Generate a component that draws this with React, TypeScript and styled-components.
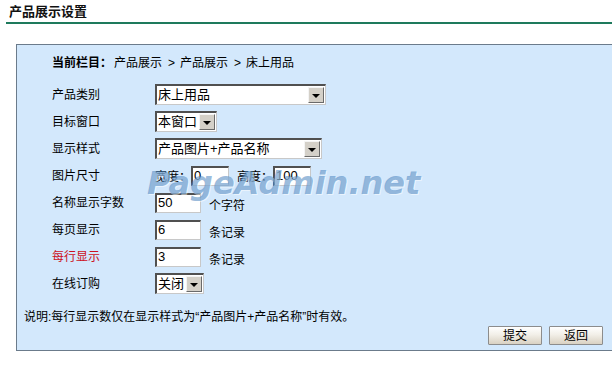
import React from "react";
import styled, { createGlobalStyle } from "styled-components";

const GlobalStyle = createGlobalStyle`
  html, body { margin: 0; padding: 0; background: #ffffff; overflow: hidden; }
  body { font-family: "Liberation Sans", "Noto Sans CJK SC", sans-serif; font-size: 12px; color: #000; }
`;

const Page = styled.div`
  width: 612px;
  height: 366px;
  overflow: hidden;
`;

const Header = styled.div`
  margin-left: 6px;
  padding: 0 0 3px 3px;
  height: 19px;
  border-bottom: 2px solid #1e7a5c;
  display: flex;
  align-items: flex-end;
`;

const Title = styled.h1`
  margin: 0;
  font-size: 13px;
  font-weight: bold;
  line-height: 15px;
  color: #111;
`;

const Panel = styled.div`
  position: relative;
  margin: 20px 0 0 16px;
  width: 600px;
  border: 1px solid #6b7b8b;
  background: #d3e8fc;
  padding: 7px 12px 5px 7px;
  box-sizing: border-box;
`;

const Crumb = styled.div`
  margin-left: 28px;
  line-height: 22px;
  height: 22px;
  b { font-weight: bold; margin-right: 2px; }
`;

const Sep = styled.span`
  margin: 0 5px 0 6px;
`;

const Form = styled.div`
  margin: 7px 0 0 28px;
  display: grid;
  grid-template-columns: 103px 1fr;
  grid-auto-rows: 27px;
  align-items: center;
`;

const Label = styled.div<{ $red?: boolean }>`
  color: ${(p) => (p.$red ? "#cc1122" : "#000")};
  line-height: 16px;
`;

const Field = styled.div`
  display: flex;
  align-items: center;
`;

const SelectBox = styled.div<{ $w: number }>`
  width: ${(p) => p.$w}px;
  height: 21px;
  box-sizing: border-box;
  display: flex;
  align-items: center;
  background: #fff;
  border-top: 2px solid #505050;
  border-left: 2px solid #505050;
  border-right: 1px solid #c8c8c8;
  border-bottom: 1px solid #c8c8c8;
`;

const SelectText = styled.span`
  flex: 1;
  padding-left: 1px;
  font-size: 13px;
  line-height: 16px;
  white-space: nowrap;
  overflow: hidden;
`;

const Arrow = styled.span`
  width: 16px;
  height: 16px;
  box-sizing: border-box;
  margin-right: 1px;
  background: #d4d0c8;
  border-top: 1px solid #f4f4f4;
  border-left: 1px solid #f4f4f4;
  border-right: 1px solid #6a6a6a;
  border-bottom: 1px solid #6a6a6a;
  display: flex;
  align-items: center;
  justify-content: center;
  &::after {
    content: "";
    border-left: 4px solid transparent;
    border-right: 4px solid transparent;
    border-top: 4px solid #000;
    margin-top: 1px;
  }
`;

const TextInput = styled.div<{ $w: number }>`
  width: ${(p) => p.$w}px;
  height: 20px;
  box-sizing: border-box;
  background: #fff;
  border-top: 2px solid #505050;
  border-left: 2px solid #505050;
  border-right: 1px solid #c8c8c8;
  border-bottom: 1px solid #c8c8c8;
  font-family: "Liberation Sans", sans-serif;
  font-size: 13px;
  line-height: 16px;
  padding-left: 1px;
`;

const Unit = styled.span<{ $gap?: number }>`
  margin-left: ${(p) => p.$gap ?? 8}px;
  margin-top: 4px;
`;

const SizeLabel = styled.span<{ $gap?: number }>`
  margin-left: ${(p) => p.$gap ?? 0}px;
  width: 36px;
  flex: none;
`;

const Note = styled.div`
  margin-top: 12px;
  line-height: 16px;
`;

const Buttons = styled.div`
  margin-top: 1px;
  display: flex;
  justify-content: flex-end;
  gap: 7px;
`;

const Button = styled.button`
  width: 54px;
  height: 19px;
  padding: 0;
  border: 1px solid #8c8c8c;
  border-radius: 1px;
  background: linear-gradient(#ffffff, #f2efe8 45%, #d9d1c2);
  font-family: "Liberation Sans", "Noto Sans CJK SC", sans-serif;
  font-size: 12px;
  line-height: 16px;
  color: #000;
`;

const Watermark = styled.div`
  position: absolute;
  left: 130px;
  top: 122px;
  font-family: "DejaVu Sans", sans-serif;
  font-weight: bold;
  font-style: italic;
  font-size: 32px;
  line-height: 1;
  color: rgba(70, 130, 190, 0.55);
  text-shadow: 1px 1px 0 rgba(255, 255, 255, 0.5);
  pointer-events: none;
  white-space: nowrap;
`;

const Select = ({ w, text }: { w: number; text: string }) => (
  <SelectBox $w={w}>
    <SelectText>{text}</SelectText>
    <Arrow />
  </SelectBox>
);

export default function App() {
  return (
    <Page>
      <GlobalStyle />
      <Header>
        <Title>产品展示设置</Title>
      </Header>
      <Panel>
        <Crumb>
          <b>当前栏目：</b>产品展示<Sep>&gt;</Sep>产品展示<Sep>&gt;</Sep>床上用品
        </Crumb>
        <Form>
          <Label>产品类别</Label>
          <Field>
            <Select w={171} text="床上用品" />
          </Field>
          <Label>目标窗口</Label>
          <Field>
            <Select w={62} text="本窗口" />
          </Field>
          <Label>显示样式</Label>
          <Field>
            <Select w={167} text="产品图片+产品名称" />
          </Field>
          <Label>图片尺寸</Label>
          <Field>
            <SizeLabel>宽度：</SizeLabel>
            <TextInput $w={38}>0</TextInput>
            <SizeLabel $gap={8}>高度：</SizeLabel>
            <TextInput $w={38}>100</TextInput>
          </Field>
          <Label>名称显示字数</Label>
          <Field>
            <TextInput $w={46}>50</TextInput>
            <Unit>个字符</Unit>
          </Field>
          <Label>每页显示</Label>
          <Field>
            <TextInput $w={46}>6</TextInput>
            <Unit>条记录</Unit>
          </Field>
          <Label $red>每行显示</Label>
          <Field>
            <TextInput $w={46}>3</TextInput>
            <Unit>条记录</Unit>
          </Field>
          <Label>在线订购</Label>
          <Field>
            <Select w={49} text="关闭" />
          </Field>
        </Form>
        <Note>说明:每行显示数仅在显示样式为“产品图片+产品名称”时有效。</Note>
        <Buttons>
          <Button>提交</Button>
          <Button>返回</Button>
        </Buttons>
        <Watermark>PageAdmin.net</Watermark>
      </Panel>
    </Page>
  );
}
